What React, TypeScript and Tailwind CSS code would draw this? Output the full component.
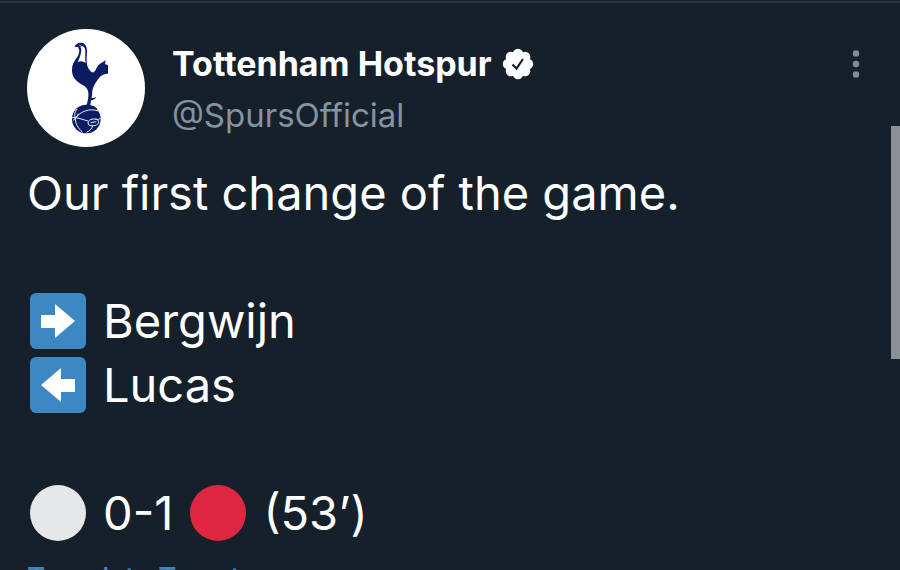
import type { ReactNode } from 'react';

const tweet = {
  name: 'Tottenham Hotspur',
  handle: '@SpursOfficial',
  text: 'Our first change of the game.',
  on: 'Bergwijn',
  off: 'Lucas',
};

function ClubCrest() {
  return (
    <svg viewBox="21 27 354 354" className="size-full" role="img" aria-label="Tottenham Hotspur crest">
      <g fill="#0b1c63">
        <path d="M163 80C168 71 178 67 188 69C197 72 201 82 201 94C200 112 199 126 202 138C207 150 214 159 221 157C228 152 229 143 235 136C241 129 249 127 257 121L255 133L264 135L264 161C252 160 241 167 234 178C226 188 219 201 217 212C217 219 216 226 215 234C220 235 224 233 229 230C225 238 219 241 213 241L211 256C219 257 226 260 232 267L178 267C183 259 191 255 200 254C204 241 206 229 205 217C203 207 199 202 192 197C174 187 161 177 157 161C154 147 157 132 165 121C172 113 178 102 178 91L174 81Z" />
        <circle cx="199" cy="297" r="43" />
      </g>
      <path d="M181 80C189 74 195 82 196 92C196 105 195 116 197 129C190 124 182 121 173 126C180 113 184 99 184 88Z" fill="#fff" />
      <circle cx="180" cy="76" r="2" fill="#fff" />
      <g fill="none" stroke="#e8ecf8" strokeWidth="3">
        <path d="M156 292C170 292 190 299 204 303M166 294C181 275 210 263 234 273M166 294C166 310 173 324 188 337M166 294C162 284 164 276 171 267M159 301C167 297 173 289 174 281" />
        <ellipse cx="220" cy="307" rx="16" ry="10" transform="rotate(-8 220 307)" />
        <path d="M212 308L229 305M226 297C234 299 239 299 241 294M218 317C216 325 210 332 200 337" />
      </g>
    </svg>
  );
}

function VerifiedBadge() {
  return (
    <svg viewBox="0 0 32 32" className="size-8 shrink-0" role="img" aria-label="Verified account">
      <g fill="#fff">
        <circle cx="16" cy="16" r="12" />
        <circle cx="16" cy="6" r="5.2" />
        <circle cx="23.1" cy="8.9" r="5.2" />
        <circle cx="26" cy="16" r="5.2" />
        <circle cx="23.1" cy="23.1" r="5.2" />
        <circle cx="16" cy="26" r="5.2" />
        <circle cx="8.9" cy="23.1" r="5.2" />
        <circle cx="6" cy="16" r="5.2" />
        <circle cx="8.9" cy="8.9" r="5.2" />
      </g>
      <path d="M10.5 16.5L14.5 20.5L21 11" fill="none" stroke="#16202a" strokeWidth="2.2" />
    </svg>
  );
}

function ArrowEmoji({ direction }: { direction: 'left' | 'right' }) {
  return (
    <svg viewBox="0 0 56 56" className="size-14 shrink-0" role="img" aria-label={`${direction} arrow`}>
      <rect width="56" height="56" rx="6" fill="#3b88c3" />
      <path
        d={direction === 'right' ? 'M11 22H25V11L45 28L25 45V35H11Z' : 'M45 22H31V11L11 28L31 45V35H45Z'}
        fill="#fff"
      />
    </svg>
  );
}

function Line({ children }: { children?: ReactNode }) {
  return <div className="flex h-16 items-center gap-[17px] pl-[3px]">{children}</div>;
}

export default function App() {
  return (
    <main className="relative h-screen overflow-hidden bg-[#16202a] font-['Inter',sans-serif] text-white">
      <article className="mt-px border-t-2 border-[#2b343e] px-[27px] pt-[26px]">
        <header className="flex items-start">
          <a href="#profile" className="size-[118px] shrink-0 overflow-hidden rounded-full bg-white">
            <ClubCrest />
          </a>
          <div className="ml-[27px] min-w-0 grow pt-[10px]">
            <div className="flex items-center gap-[10px]">
              <h1 className="text-[34px] leading-[50px] font-bold">{tweet.name}</h1>
              <VerifiedBadge />
            </div>
            <p className="text-[33px] leading-[52px] text-[#8493a0]">{tweet.handle}</p>
          </div>
          <button type="button" aria-label="More options" className="mt-[15px] mr-2 p-1">
            <svg viewBox="0 0 10 32" className="h-8 w-[10px]" fill="#7f8e9b">
              <circle cx="5" cy="5.5" r="3.2" />
              <circle cx="5" cy="16" r="3.2" />
              <circle cx="5" cy="26.5" r="3.2" />
            </svg>
          </button>
        </header>

        <div className="mt-[14px] text-[47px]">
          <p className="leading-[64px]">{tweet.text}</p>
          <Line />
          <Line>
            <ArrowEmoji direction="right" />
            <span>{tweet.on}</span>
          </Line>
          <Line>
            <ArrowEmoji direction="left" />
            <span>{tweet.off}</span>
          </Line>
          <Line />
          <Line>
            <span className="size-14 rounded-full bg-[#e6e7e8]" />
            <span>0-1</span>
            <span className="size-14 rounded-full bg-[#df2640]" />
            <span>(53’)</span>
          </Line>
        </div>

        <a href="#translate" className="mt-[15px] block text-[28px] leading-[36px] font-medium text-[#3b88c3]">
          Translate Tweet
        </a>
      </article>

      {/* scroll thumb */}
      <div className="absolute top-[126px] right-0 h-[233px] w-[9px] bg-[#8b9097]" />
    </main>
  );
}
